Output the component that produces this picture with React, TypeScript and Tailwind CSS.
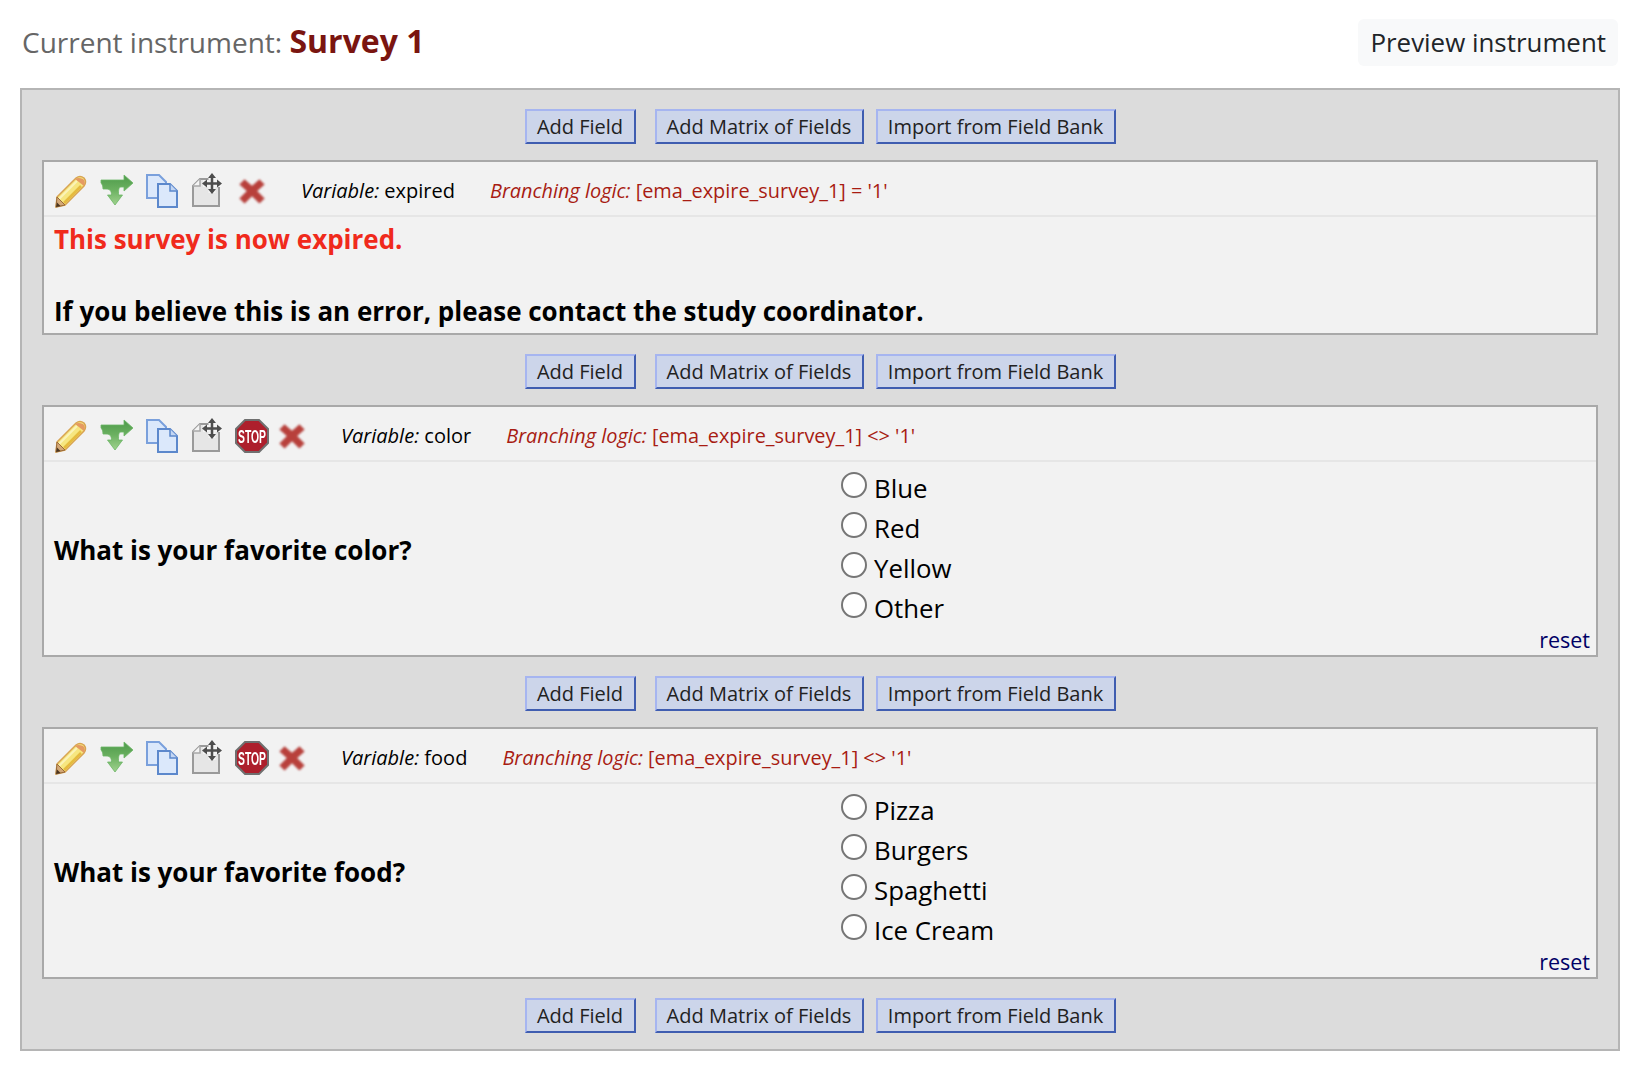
import React from "react";

function PencilIcon() {
  return (
    <svg width="34" height="34" viewBox="0 0 34 34" className="blur-[0.5px] -ml-[1px] mr-[1px]">
      <path d="M3 23 L22 4 Q26 1 30 4 Q33 8 30 12 L11 31 L2 33 Z" fill="#f6e680" stroke="#d8a452" strokeWidth="1.5" />
      <path d="M21 5 Q24 3 29 5 Q32 8 30 12 Z" fill="#e59a62" />
      <path d="M5 25 L23 7" stroke="#fbf3b8" strokeWidth="2" />
      <path d="M10 29 L27 12" stroke="#e5bb3e" strokeWidth="2.5" />
      <path d="M3 23 L11 31 L2 33 Z" fill="#d3a877" stroke="#9a6a38" strokeWidth="1" />
      <path d="M2 33 L3 28.5 L6.5 32 Z" fill="#4a3520" />
    </svg>
  );
}

function BranchIcon() {
  return (
    <svg width="34" height="34" viewBox="0 0 34 34" className="blur-[0.6px]">
      <defs>
        <linearGradient id="branchFill" x1="0" y1="0" x2="0" y2="1">
          <stop offset="0" stopColor="#4d9a4a" />
          <stop offset="0.5" stopColor="#6cb161" />
          <stop offset="1" stopColor="#a0d28e" />
        </linearGradient>
      </defs>
      <path
        d="M1 6 H24 V1 L33 9 L24 17 V13 H21 C18.5 13 18.5 16 18.5 21 H22.5 L15 31 L7.5 21 H11.5 C11.5 17 10 15 6 15 L3 15 C3 12 2 10 1 9 Z"
        fill="url(#branchFill)"
        stroke="#6bb565"
        strokeWidth="0.8"
      />
    </svg>
  );
}

function CopyIcon() {
  return (
    <svg width="34" height="36" viewBox="0 0 34 36" className="blur-[0.3px]">
      <path d="M2 2 H14 L21 9 V25 H2 Z" fill="#dbe8fb" stroke="#7aa0dc" strokeWidth="2" />
      <path d="M13 11 H25 L32 18 V34 H13 Z" fill="#dbe8fb" stroke="#5c88cc" strokeWidth="2" />
      <path d="M25 11 V18 H32" fill="#c3d6f3" stroke="#5c88cc" strokeWidth="1.5" />
    </svg>
  );
}

function MoveIcon() {
  return (
    <svg width="34" height="36" viewBox="0 0 34 36" className="blur-[0.5px]">
      <path d="M10 6 H21 L29 14 V33 H3 V13 Z" fill="#e6e6e6" stroke="#9a9a9a" strokeWidth="2" />
      <path d="M10 6 V13 H3" fill="#f4f4f4" stroke="#a8a8a8" strokeWidth="1.5" />
      <path d="M22 1 V20 M13 10.5 H32" stroke="#f4f4f4" strokeWidth="7" />
      <path d="M22 3 V18 M15 10.5 H30" stroke="#4d4d4d" strokeWidth="2.5" />
      <path d="M22 0 L26 5 H18 Z M22 21 L26 16 H18 Z M12 10.5 L17 6.5 V14.5 Z M32 10.5 L27 6.5 V14.5 Z" fill="#4d4d4d" />
    </svg>
  );
}

function StopIcon() {
  return (
    <svg width="34" height="34" viewBox="0 0 34 34" className="shrink-0 blur-[0.3px]">
      <path d="M10 1 H24 L33 10 V24 L24 33 H10 L1 24 V10 Z" fill="#ad1f2c" stroke="#6f6f6f" strokeWidth="2" />
      <text
        transform="translate(17 23.5) scale(0.94 1.6)"
        textAnchor="middle"
        fontSize="11"
        fontWeight="700"
        fill="#fff"
        fontFamily="'Liberation Sans', sans-serif"
      >
        STOP
      </text>
    </svg>
  );
}

function DeleteIcon() {
  return (
    <svg width="26" height="26" viewBox="0 0 28 28" className="blur-[0.9px]">
      <path d="M6 2 L14 9 L22 2 L27 7 L19 14 L27 22 L22 27 L14 19 L6 27 L1 22 L9 14 L1 7 Z" fill="#b8403b" stroke="#b23a36" strokeWidth="1" />
    </svg>
  );
}

function ActionButtons({ className = "" }: { className?: string }) {
  const btn =
    "h-[35px] pt-[1px] text-[20px] leading-none text-[#222] bg-[#ccd5ea] border-2 border-t-[#a6b5f0] border-l-[#a6b5f0] border-r-[#3f5db0] border-b-[#3f5db0]";
  return (
    <div className={"flex justify-center gap-3 " + className}>
      <button type="button" className={btn + " w-[111px] mr-[7px]"}>Add Field</button>
      <button type="button" className={btn + " w-[209px]"}>Add Matrix of Fields</button>
      <button type="button" className={btn + " w-[240px]"}>Import from Field Bank</button>
    </div>
  );
}

function CardHeader({ stop, variable, logic }: {
  stop?: boolean;
  variable: string;
  logic: string;
}) {
  return (
    <div className="h-[55px] flex items-center pl-[11px] pt-[4px] border-b-2 border-[#e6e6e6]">
      <div className="flex items-center gap-[11px]">
        <PencilIcon />
        <BranchIcon />
        <CopyIcon />
        <MoveIcon />
        {stop && <StopIcon />}
      </div>
      <div className={stop ? "ml-[10px]" : "ml-[15px]"}>
        <DeleteIcon />
      </div>
      <span className="ml-[36px] text-[20px] text-black">
        <i>Variable:</i> {variable}
      </span>
      <span className="ml-[35px] text-[19.9px] text-[#a81c12]">
        <i>Branching logic:</i> {logic}
      </span>
    </div>
  );
}

function Question({ variable, logic, label, options }: {
  variable: string;
  logic: string;
  label: string;
  options: string[];
}) {
  return (
    <div className="bg-[#f2f2f2] border-2 border-[#a9a9a9]">
      <CardHeader stop variable={variable} logic={logic} />
      <div className="flex pt-[6px]">
        <div className="w-[797px] pl-[10px] pt-[4px] flex items-center text-[26px] font-bold text-black">{label}</div>
        <div className="flex flex-col">
          {options.map((o) => (
            <label key={o} className="h-[40px] flex items-center gap-[7px] text-[25.8px] text-black">
              <input type="radio" className="appearance-none w-[26px] h-[26px] rounded-full border-2 border-[#767676] bg-white -mt-[6px]" />
              <span>{o}</span>
            </label>
          ))}
        </div>
      </div>
      <div className="h-[27px] flex justify-end items-center pr-[6px] pb-[2px] text-[21.5px] text-[#000066]">reset</div>
    </div>
  );
}

export default function App() {
  return (
    <div className="w-[1636px] h-[1084px] bg-white font-['Open_Sans',sans-serif]">
      <div className="flex items-center justify-between pl-[22px] pr-[18px] h-[88px] pb-[4px]">
        <div className="text-[28px] text-[#666] -mt-[2px]">
          Current instrument: <b className="text-[#7a1510] text-[32px]">Survey 1</b>
        </div>
        <div className="h-[47px] px-[12px] flex items-center bg-[#f8f9fa] rounded-md text-[25.9px] text-[#212529]">Preview instrument</div>
      </div>
      <div className="mx-[20px] w-[1600px] bg-[#dcdcdc] border-2 border-[#b5b5b5] pt-[19px] pb-[16px] px-[20px] flex flex-col gap-[16px]">
        <ActionButtons />
        <div className="bg-[#f2f2f2] border-2 border-[#a9a9a9]">
          <CardHeader variable="expired" logic="[ema_expire_survey_1] = '1'" />
          <div className="px-[10px] pt-[4px] pb-[4px] text-[25.97px] font-bold leading-[36px] text-black">
            <div className="text-[#f02a1c]">This survey is now expired.</div>
            <div className="h-[36px]" />
            <div>If you believe this is an error, please contact the study coordinator.</div>
          </div>
        </div>
        <ActionButtons className="mt-[3px]" />
        <Question
          variable="color"
          logic="[ema_expire_survey_1] <> '1'"
          label="What is your favorite color?"
          options={["Blue", "Red", "Yellow", "Other"]}
        />
        <ActionButtons className="mt-[3px]" />
        <Question
          variable="food"
          logic="[ema_expire_survey_1] <> '1'"
          label="What is your favorite food?"
          options={["Pizza", "Burgers", "Spaghetti", "Ice Cream"]}
        />
        <ActionButtons className="mt-[3px]" />
      </div>
    </div>
  );
}
